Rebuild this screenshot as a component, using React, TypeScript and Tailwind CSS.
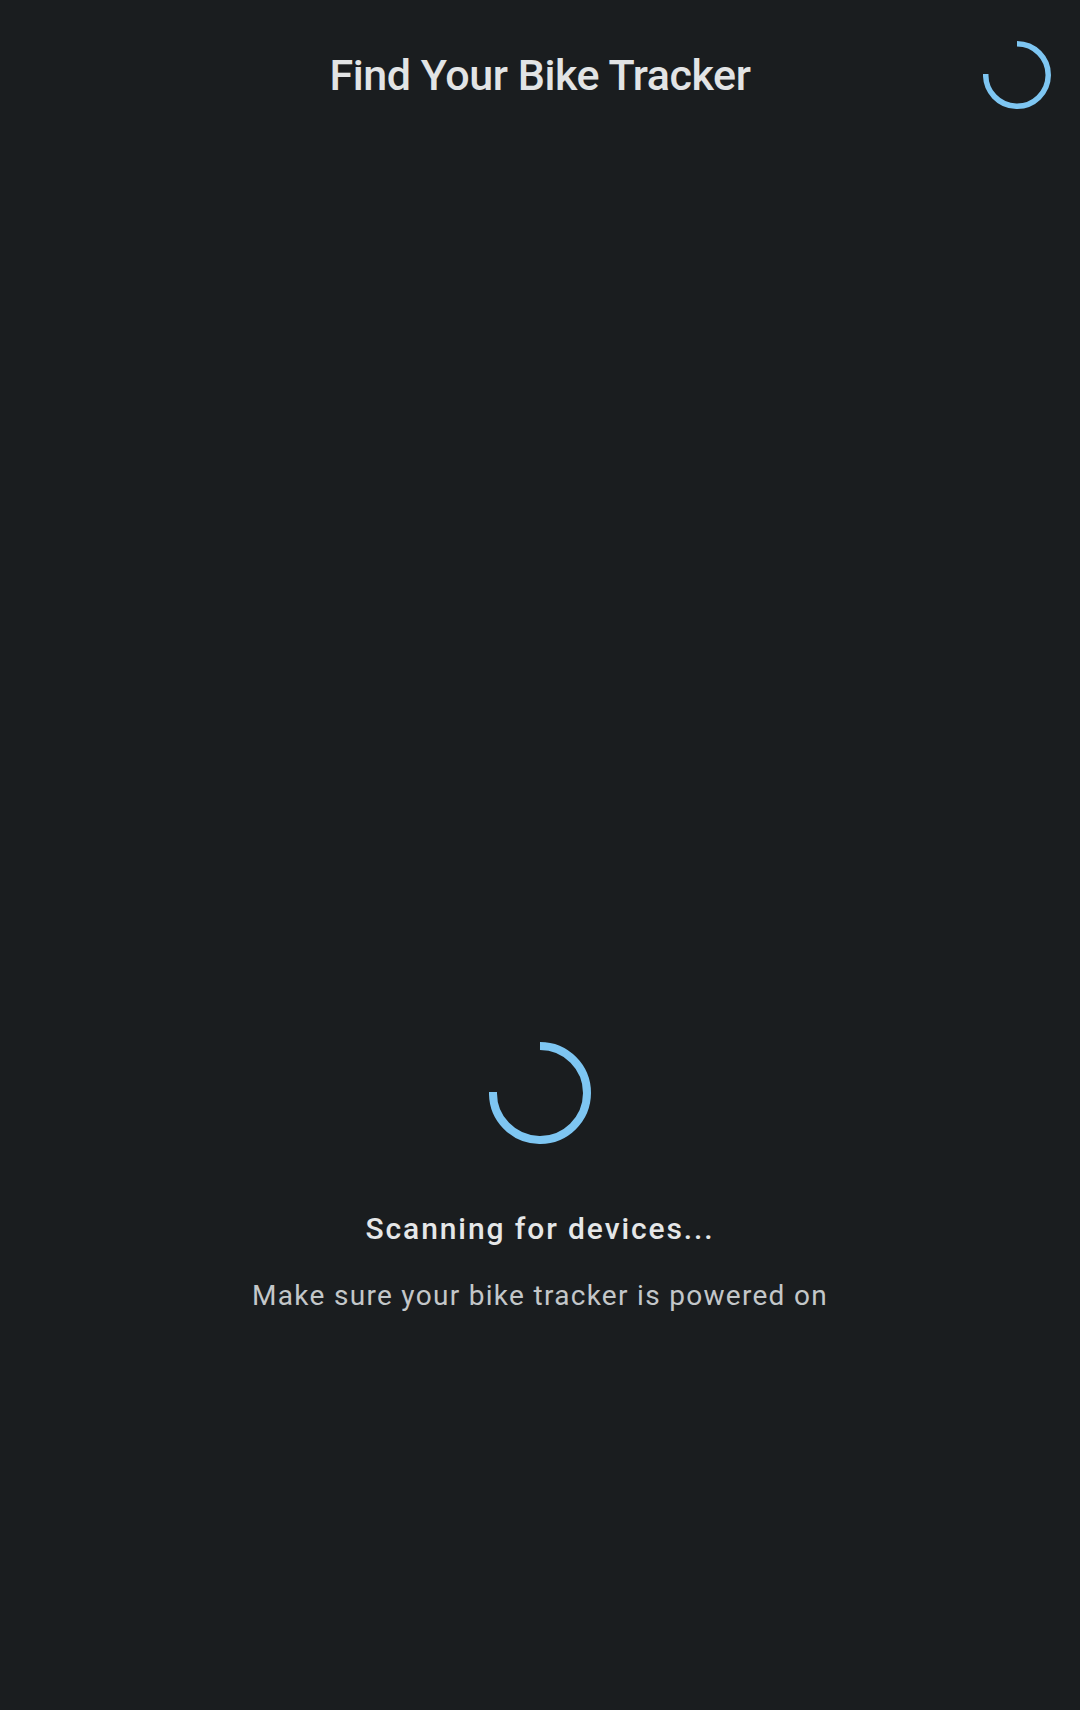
import React from "react";

function Spinner({ size, stroke }: { size: number; stroke: number }) {
  const r = (size - stroke) / 2;
  const c = size / 2;
  // arc from 12 o'clock clockwise to ~9 o'clock (270deg)
  const startX = c;
  const startY = c - r;
  const endX = c - r;
  const endY = c - 1;
  return (
    <svg width={size} height={size} viewBox={`0 0 ${size} ${size}`}>
      <path
        d={`M ${startX} ${startY} A ${r} ${r} 0 1 1 ${endX} ${endY}`}
        fill="none"
        stroke="#7ec6f2"
        strokeWidth={stroke}
        strokeLinecap="butt"
      />
    </svg>
  );
}

export default function App() {
  return (
    <div
      className="w-[1080px] h-[1710px] bg-[#1a1d1f] flex flex-col"
      style={{ fontFamily: "Roboto, 'Noto Sans', sans-serif" }}
    >
      <header className="h-[150px] grid grid-cols-[1fr_auto_1fr] items-center">
        <div />
        <h1 className="text-[43px] leading-none font-medium text-[#e2e4e5] tracking-[-0.01em]">
          Find Your Bike Tracker
        </h1>
        <div className="flex justify-end pr-[29px]">
          <Spinner size={68} stroke={5.5} />
        </div>
      </header>
      <main className="flex flex-col items-center pt-[892px]">
        <Spinner size={102} stroke={8} />
        <p className="mt-[70px] text-[30px] leading-none font-medium text-[#e5e7e8] tracking-[1.9px]">
          Scanning for devices...
        </p>
        <p className="mt-[38px] text-[28px] leading-none text-[#c3c7c9] tracking-[1.3px]">
          Make sure your bike tracker is powered on
        </p>
      </main>
    </div>
  );
}
